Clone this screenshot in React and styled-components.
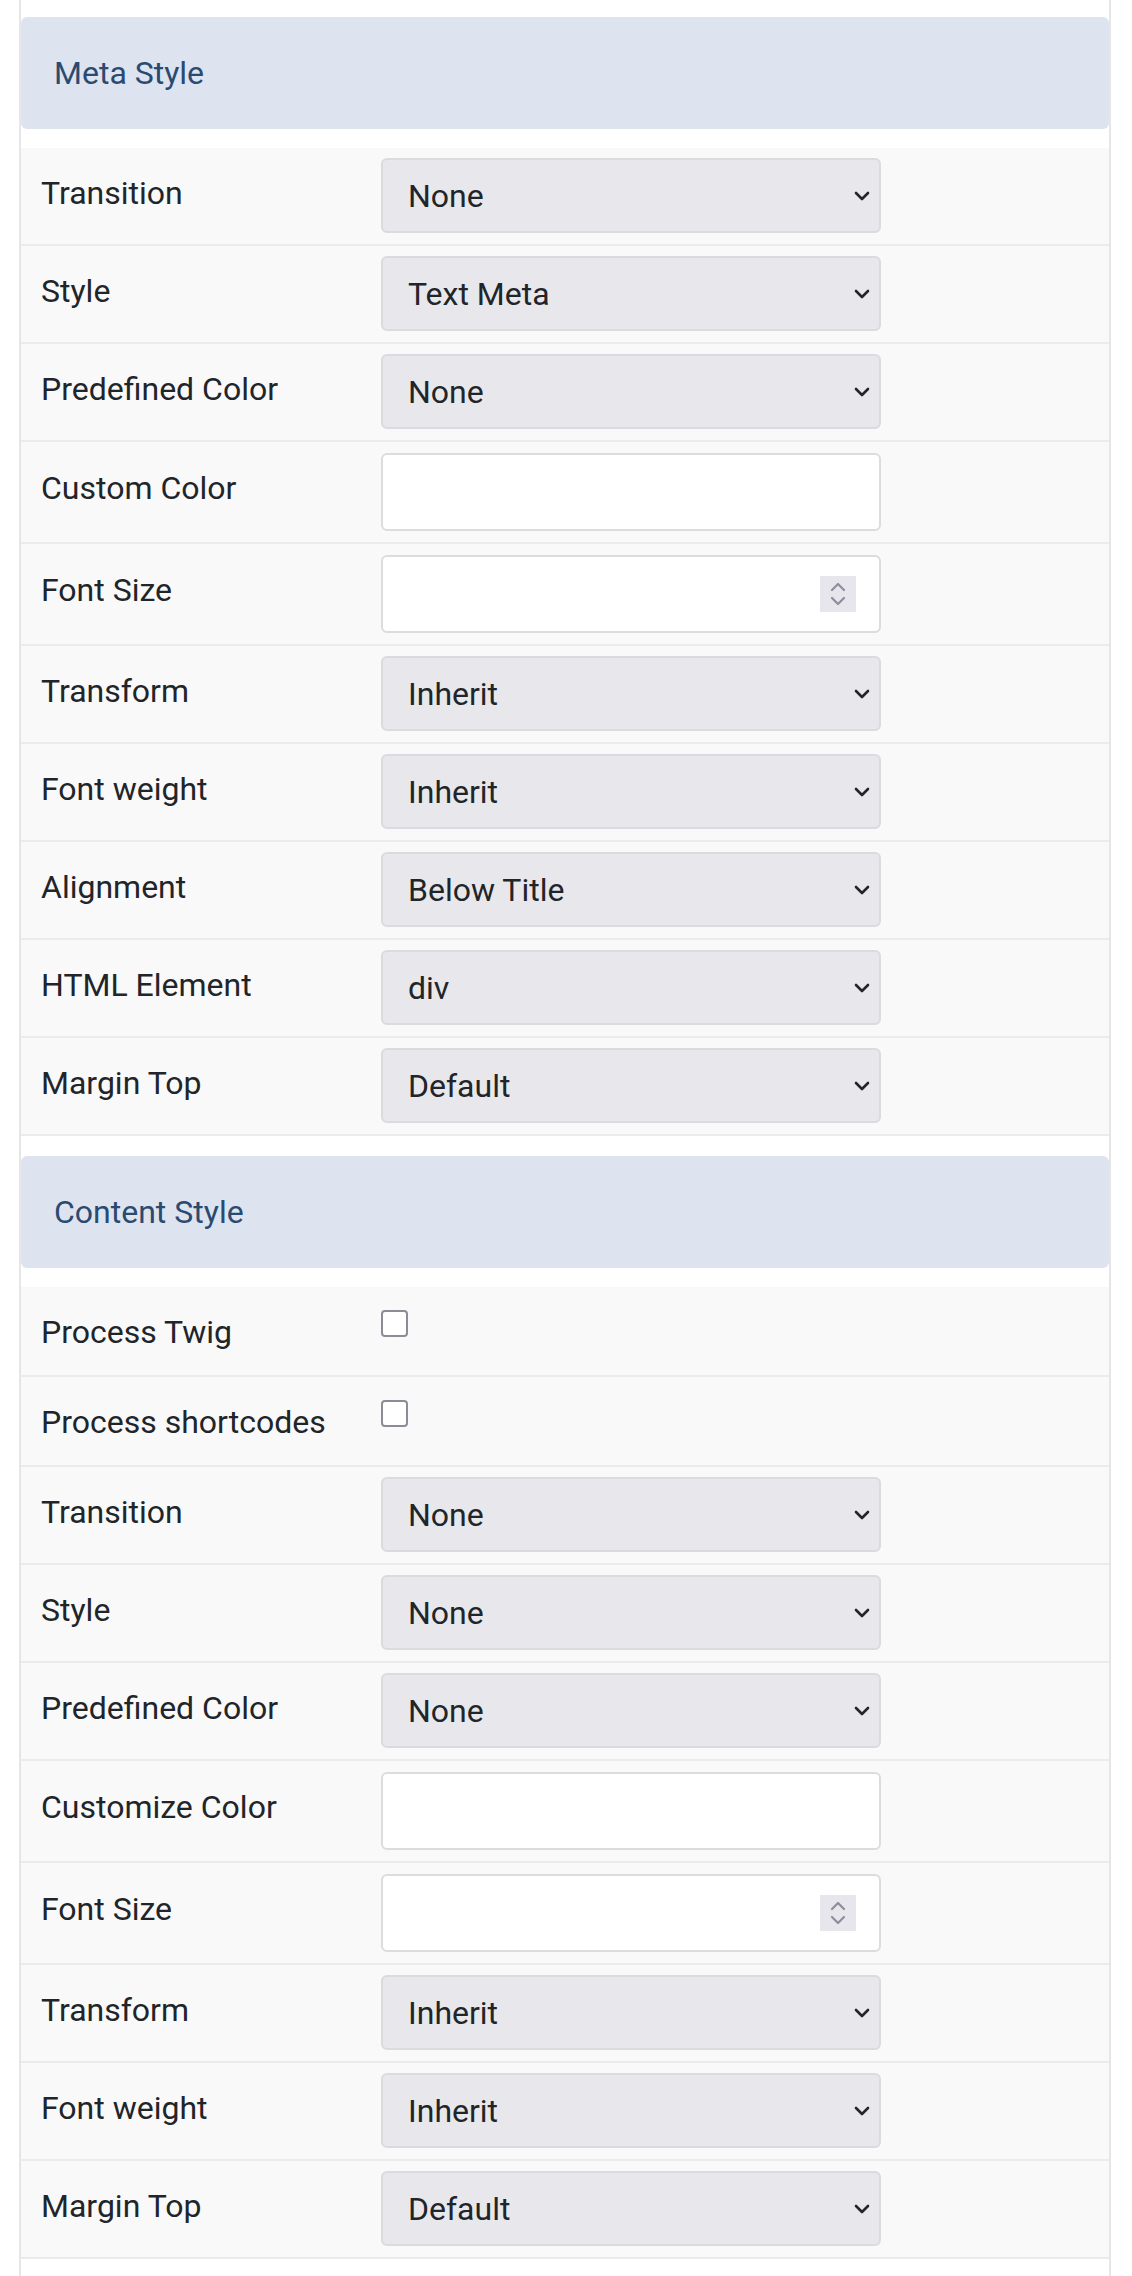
import React from "react";
import styled, { createGlobalStyle } from "styled-components";

const GlobalStyle = createGlobalStyle`
  html, body {
    margin: 0;
    padding: 0;
    background: #ffffff;
  }
  body {
    font-family: Roboto, "Liberation Sans", Arial, sans-serif;
    color: #212529;
  }
`;

const metaRows = [
  { label: "Transition", type: "select", value: "None" },
  { label: "Style", type: "select", value: "Text Meta" },
  { label: "Predefined Color", type: "select", value: "None" },
  { label: "Custom Color", type: "text" },
  { label: "Font Size", type: "number" },
  { label: "Transform", type: "select", value: "Inherit" },
  { label: "Font weight", type: "select", value: "Inherit" },
  { label: "Alignment", type: "select", value: "Below Title" },
  { label: "HTML Element", type: "select", value: "div" },
  { label: "Margin Top", type: "select", value: "Default" },
];

const contentRows = [
  { label: "Process Twig", type: "checkbox" },
  { label: "Process shortcodes", type: "checkbox" },
  { label: "Transition", type: "select", value: "None" },
  { label: "Style", type: "select", value: "None" },
  { label: "Predefined Color", type: "select", value: "None" },
  { label: "Customize Color", type: "text" },
  { label: "Font Size", type: "number" },
  { label: "Transform", type: "select", value: "Inherit" },
  { label: "Font weight", type: "select", value: "Inherit" },
  { label: "Margin Top", type: "select", value: "Default" },
];

const rowHeights = { select: 98, text: 102, number: 102, checkbox: 90 };

function SelectField({ value }) {
  return (
    <SelectWrap>
      <Select defaultValue={value}>
        <option>{value}</option>
      </Select>
      <Chevron viewBox="0 0 16 10" aria-hidden="true">
        <polyline points="2,2 8,8 14,2" />
      </Chevron>
    </SelectWrap>
  );
}

function NumberField() {
  return (
    <SelectWrap>
      <TextInput type="text" inputMode="numeric" />
      <Spinner>
        <svg width="16" height="26" viewBox="0 0 16 26" aria-hidden="true">
          <polyline points="2,9 8,3 14,9" />
          <polyline points="2,17 8,23 14,17" />
        </svg>
      </Spinner>
    </SelectWrap>
  );
}

function Field({ row }) {
  if (row.type === "select") return <SelectField value={row.value} />;
  if (row.type === "text") return <TextInput type="text" />;
  if (row.type === "number") return <NumberField />;
  return <Checkbox type="checkbox" />;
}

function Section({ title, rows }) {
  return (
    <SectionBox>
      <Header>{title}</Header>
      <div>
        {rows.map((row, i) => (
          <Row key={i} $h={rowHeights[row.type]} $input={row.type === "text" || row.type === "number"}>
            <Label>{row.label}</Label>
            <Field row={row} />
          </Row>
        ))}
      </div>
    </SectionBox>
  );
}

export default function App() {
  return (
    <>
      <GlobalStyle />
      <Panel>
        <Section title="Meta Style" rows={metaRows} />
        <Section title="Content Style" rows={contentRows} />
      </Panel>
    </>
  );
}

const Panel = styled.div`
  box-sizing: border-box;
  width: 1092px;
  min-height: 2276px;
  margin-left: 19px;
  padding-top: 17px;
  border-left: 2px solid #e6e6e6;
  border-right: 2px solid #e6e6e6;
`;

const SectionBox = styled.section`
  margin-bottom: 20px;
`;

const Header = styled.h3`
  box-sizing: border-box;
  height: 112px;
  margin: 0 0 19px;
  padding-left: 33px;
  display: flex;
  align-items: center;
  background: #dde4f0;
  border-radius: 6px;
  color: #2b4a70;
  font-size: 32px;
  font-weight: 400;
`;

const Row = styled.div`
  box-sizing: border-box;
  height: ${(p) => p.$h}px;
  padding: ${(p) => (p.$input ? "11px" : "10px")} 20px 0;
  display: grid;
  grid-template-columns: 340px 500px;
  align-items: start;
  background: #f9f9f9;
  border-bottom: 2px solid #ebebeb;
`;

const Label = styled.label`
  margin-top: 12px;
  font-size: 32px;
  line-height: 47px;
  color: #212529;
`;

const SelectWrap = styled.div`
  position: relative;
  width: 500px;
`;

const Select = styled.select`
  appearance: none;
  box-sizing: border-box;
  width: 100%;
  height: 75px;
  padding: 0 50px 0 25px;
  background: #e8e8ec;
  border: 2px solid #dadadf;
  border-radius: 6px;
  font-family: Roboto, "Liberation Sans", Arial, sans-serif;
  font-size: 32px;
  color: #212529;
  outline: none;
`;

const Chevron = styled.svg`
  position: absolute;
  right: 11px;
  top: 33px;
  width: 16px;
  height: 10px;
  fill: none;
  stroke: #222529;
  stroke-width: 2.6;
  stroke-linecap: round;
  stroke-linejoin: round;
  pointer-events: none;
`;

const TextInput = styled.input`
  box-sizing: border-box;
  width: 500px;
  height: 78px;
  padding: 0 25px;
  background: #ffffff;
  border: 2px solid #dcdce0;
  border-radius: 6px;
  font-family: Roboto, "Liberation Sans", Arial, sans-serif;
  font-size: 32px;
  outline: none;
`;

const Spinner = styled.span`
  position: absolute;
  right: 25px;
  top: 21px;
  width: 36px;
  height: 36px;
  display: flex;
  align-items: center;
  justify-content: center;
  background: #e6e6ec;
  pointer-events: none;

  svg {
    fill: none;
    stroke: #8d8d9d;
    stroke-width: 2.2;
    stroke-linecap: round;
    stroke-linejoin: round;
  }
`;

const Checkbox = styled.input`
  appearance: none;
  box-sizing: border-box;
  width: 27px;
  height: 27px;
  margin: 13px 0 0;
  background: #ffffff;
  border: 2px solid #8c8c98;
  border-radius: 4px;
`;
